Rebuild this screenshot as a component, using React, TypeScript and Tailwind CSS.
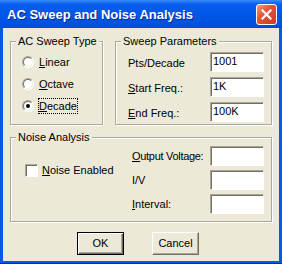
import type { ReactNode } from 'react'

const FACE = 'bg-[#ece9d8]'

/** 经典蚀刻分组框:灰线 + 白色错位线,标题压在上边框 */
function GroupBox({ label, className, children }: { label: string; className: string; children: ReactNode }) {
  return (
    <div className={`relative border border-[#aca899] shadow-[1px_1px_0_#fff,inset_1px_1px_0_#fff] ${className}`}>
      <span className={`absolute -top-[8px] left-[5px] px-[2px] leading-[14px] ${FACE}`}>{label}</span>
      {children}
    </div>
  )
}

function Radio({ label, checked, focused }: { label: ReactNode; checked?: boolean; focused?: boolean }) {
  return (
    <div className="flex h-[16px] items-center gap-[4px]">
      <div className="h-[12px] w-[12px] rounded-full border border-t-[#aca899] border-l-[#aca899] border-b-white border-r-white">
        <div className="flex h-full w-full items-center justify-center rounded-full border border-t-[#716f64] border-l-[#716f64] border-b-[#f1efe2] border-r-[#f1efe2] bg-white">
          {checked && <div className="h-[4px] w-[4px] rounded-full bg-black" />}
        </div>
      </div>
      <span className={`border leading-[14px] ${focused ? 'border-dotted border-black' : 'border-transparent'}`}>{label}</span>
    </div>
  )
}

function Field({ value }: { value?: string }) {
  return (
    <div className="h-[20px] w-[54px] border border-t-[#aca899] border-l-[#aca899] border-b-white border-r-white bg-white pl-[2px] leading-[17px] shadow-[inset_1px_1px_0_#716f64]">
      {value}
    </div>
  )
}

function Button({ children, isDefault }: { children: ReactNode; isDefault?: boolean }) {
  return (
    <button
      type="button"
      className={`h-[23px] w-[47px] ${FACE} ${
        isDefault
          ? 'border border-black shadow-[inset_1px_1px_0_#fff,inset_-1px_-1px_0_#716f64,inset_-2px_-2px_0_#aca899]'
          : 'border border-t-white border-l-white border-b-[#716f64] border-r-[#716f64] shadow-[inset_-1px_-1px_0_#aca899]'
      }`}
    >
      {children}
    </button>
  )
}

const u = (c: string) => <span className="underline underline-offset-[1px]">{c}</span>

export default function App() {
  return (
    <div className="flex h-[264px] w-[282px] flex-col border-b border-[#0030a8] bg-[#0758ea] font-['Liberation_Sans',Arial,sans-serif] text-[11px] text-black select-none">
      <div className="flex h-[28px] items-center justify-between bg-[linear-gradient(to_bottom,#3a8cfb_0%,#0a5ff0_14%,#0056e6_50%,#0052e0_85%,#0049d4_100%)] pl-[7px] pr-[5px]">
        <span className="pt-[2px] text-[13px] font-bold text-white [text-shadow:1px_1px_0_#0a2a8a]">AC Sweep and Noise Analysis</span>
        <div className="flex h-[21px] w-[21px] items-center justify-center rounded-[3px] border border-white bg-[linear-gradient(135deg,#f29a78_0%,#e2573a_40%,#c83a1e_100%)]">
          <svg width="11" height="11" viewBox="0 0 11 11">
            <path d="M1.5 1.5 L9.5 9.5 M9.5 1.5 L1.5 9.5" stroke="#fff" strokeWidth="2.2" strokeLinecap="square" />
          </svg>
        </div>
      </div>

      <div className={`mx-[3px] mb-[2px] flex flex-1 flex-col pl-[7px] pt-[13px] ${FACE}`}>
        <div className="flex gap-[12px]">
          <GroupBox label="AC Sweep Type" className="h-[84px] w-[93px]">
            <div className="flex flex-col gap-[6px] pl-[11px] pt-[12px]">
              <Radio label={<>{u('L')}inear</>} />
              <Radio label={<>{u('O')}ctave</>} />
              <Radio label={<>{u('D')}ecade</>} checked focused />
            </div>
          </GroupBox>
          <GroupBox label="Sweep Parameters" className="h-[84px] w-[157px]">
            <div className="flex flex-col gap-[5px] pl-[12px] pt-[10px]">
              <div className="flex items-center">
                <span className="w-[82px] pt-[2px]">Pts/Decade</span>
                <Field value="1001" />
              </div>
              <div className="flex items-center">
                <span className="w-[82px] pt-[2px]">{u('S')}tart Freq.:</span>
                <Field value="1K" />
              </div>
              <div className="flex items-center">
                <span className="w-[82px] pt-[2px]">{u('E')}nd Freq.:</span>
                <Field value="100K" />
              </div>
            </div>
          </GroupBox>
        </div>

        <GroupBox label="Noise Analysis" className="mt-[12px] h-[85px] w-[262px]">
          <div className="flex pl-[14px]">
            <div className="flex w-[107px] items-center gap-[4px] self-start pt-[24px]">
              <div className="h-[13px] w-[13px] border border-t-[#aca899] border-l-[#aca899] border-b-white border-r-white bg-white shadow-[inset_1px_1px_0_#716f64]" />
              <span>{u('N')}oise Enabled</span>
            </div>
            <div className="flex flex-col gap-[4px] pt-[8px]">
              <div className="flex items-center">
                <span className="w-[78px] tracking-[-0.3px]">{u('O')}utput Voltage:</span>
                <Field />
              </div>
              <div className="flex items-center">
                <span className="w-[78px]">I/V</span>
                <Field />
              </div>
              <div className="flex items-center">
                <span className="w-[78px]">{u('I')}nterval:</span>
                <Field />
              </div>
            </div>
          </div>
        </GroupBox>

        <div className="mt-[10px] flex gap-[28px] pl-[67px]">
          <Button isDefault>OK</Button>
          <Button>Cancel</Button>
        </div>
      </div>
    </div>
  )
}
